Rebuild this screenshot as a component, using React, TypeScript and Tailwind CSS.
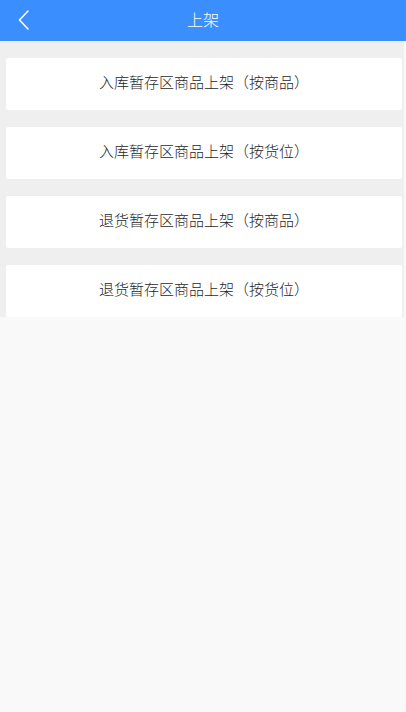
const items = [
  "入库暂存区商品上架（按商品）",
  "入库暂存区商品上架（按货位）",
  "退货暂存区商品上架（按商品）",
  "退货暂存区商品上架（按货位）",
];

export default function App() {
  return (
    <div
      className="flex h-[712px] w-[406px] flex-col bg-[#f9f9f9]"
      style={{ fontFamily: '"Noto Sans CJK SC", "Noto Sans", sans-serif' }}
    >
      <header className="relative flex h-[41px] shrink-0 items-center justify-center bg-[#3a8efe] pb-[4px]">
        <button type="button" className="absolute left-[14px] top-[7px] flex h-[26px] w-[18px] items-center justify-center">
          <svg width="14" height="22" viewBox="0 0 14 22" fill="none">
            <path d="M12 2 L3.5 11 L12 20" stroke="#fff" strokeWidth="1.6" strokeLinecap="round" strokeLinejoin="round" />
          </svg>
        </button>
        <h1 className="text-[16px] font-light leading-none text-white">上架</h1>
      </header>
      <div className="flex h-[276px] w-[404px] shrink-0 flex-col overflow-hidden bg-[#efefef] pl-[6px] pr-[2px]">
        {items.map((label) => (
          <div
            key={label}
            className="mt-[17px] flex h-[52px] shrink-0 items-center justify-center rounded-[2px] bg-white pb-[3px] text-[15px] font-light text-[#1f1f1f]"
          >
            {label}
          </div>
        ))}
      </div>
    </div>
  );
}
